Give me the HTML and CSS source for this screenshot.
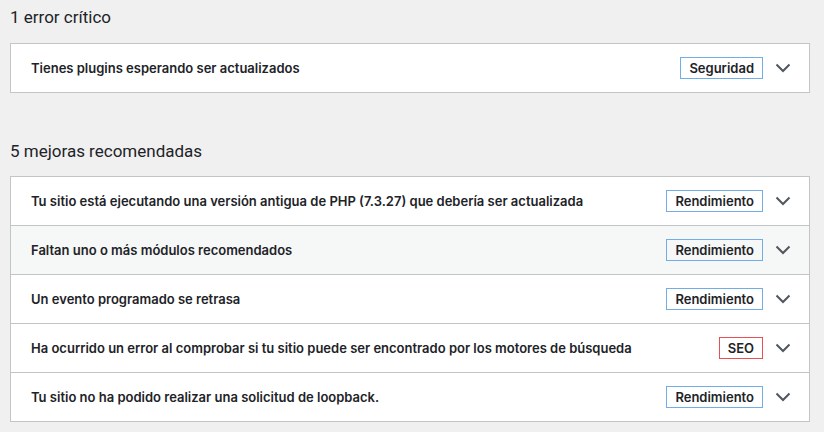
FILE: index.html
```html
<!DOCTYPE html>
<html>
<head>
  <meta charset="utf-8"/>
  <title>Salud del sitio</title>
  <link rel="stylesheet" href="styles.css">
</head>
<body>
  <div class="wrap">
    <h2 class="group-title">1 error crítico</h2>
    <div class="issues">
      <div class="issue">
        <span class="issue-label">Tienes plugins esperando ser actualizados</span>
        <span class="badge">Seguridad</span>
        <svg class="chevron" viewBox="0 0 16 10"><path d="M1.5 1.5 L8 8 L14.5 1.5"/></svg>
      </div>
    </div>

    <h2 class="group-title second">5 mejoras recomendadas</h2>
    <div class="issues">
      <div class="issue">
        <span class="issue-label">Tu sitio está ejecutando una versión antigua de PHP (7.3.27) que debería ser actualizada</span>
        <span class="badge">Rendimiento</span>
        <svg class="chevron" viewBox="0 0 16 10"><path d="M1.5 1.5 L8 8 L14.5 1.5"/></svg>
      </div>
      <div class="issue hover">
        <span class="issue-label">Faltan uno o más módulos recomendados</span>
        <span class="badge">Rendimiento</span>
        <svg class="chevron" viewBox="0 0 16 10"><path d="M1.5 1.5 L8 8 L14.5 1.5"/></svg>
      </div>
      <div class="issue">
        <span class="issue-label">Un evento programado se retrasa</span>
        <span class="badge">Rendimiento</span>
        <svg class="chevron" viewBox="0 0 16 10"><path d="M1.5 1.5 L8 8 L14.5 1.5"/></svg>
      </div>
      <div class="issue">
        <span class="issue-label">Ha ocurrido un error al comprobar si tu sitio puede ser encontrado por los motores de búsqueda</span>
        <span class="badge badge-red">SEO</span>
        <svg class="chevron" viewBox="0 0 16 10"><path d="M1.5 1.5 L8 8 L14.5 1.5"/></svg>
      </div>
      <div class="issue">
        <span class="issue-label">Tu sitio no ha podido realizar una solicitud de loopback.</span>
        <span class="badge">Rendimiento</span>
        <svg class="chevron" viewBox="0 0 16 10"><path d="M1.5 1.5 L8 8 L14.5 1.5"/></svg>
      </div>
    </div>
  </div>
</body>
</html>
```

FILE: styles.css
```css
body {
  margin: 0;
  background: #f0f0f1;
  font-family: Inter, "Noto Sans", sans-serif;
  color: #1d2327;
}
.wrap {
  width: 800px;
  margin-left: 10px;
}
.group-title {
  margin: 5px 0 14px;
  font-family: Roboto, Inter, sans-serif;
  font-size: 17px;
  font-weight: 400;
  line-height: 24px;
}
.group-title.second {
  margin-top: 46px;
  margin-bottom: 13px;
}
.issues {
  background: #fff;
  border: 1px solid #c3c4c7;
}
.issue {
  display: flex;
  align-items: center;
  height: 48px;
  padding: 0 18px 0 20px;
  border-top: 1px solid #c3c4c7;
}
.issue:first-child {
  border-top: none;
}
.issue.hover {
  background: #f6f7f7;
}
.issue-label {
  flex: 1;
  font-size: 13px;
  font-weight: 600;
}
.badge {
  display: inline-block;
  padding: 2px 8px;
  font-size: 13px;
  font-weight: 600;
  line-height: 16px;
  border: 1px solid #72aee6;
}
.badge-red {
  border-color: #e65054;
}
.chevron {
  width: 16px;
  height: 10px;
  margin-left: 12px;
  fill: none;
  stroke: #50575e;
  stroke-width: 2;
}
```
